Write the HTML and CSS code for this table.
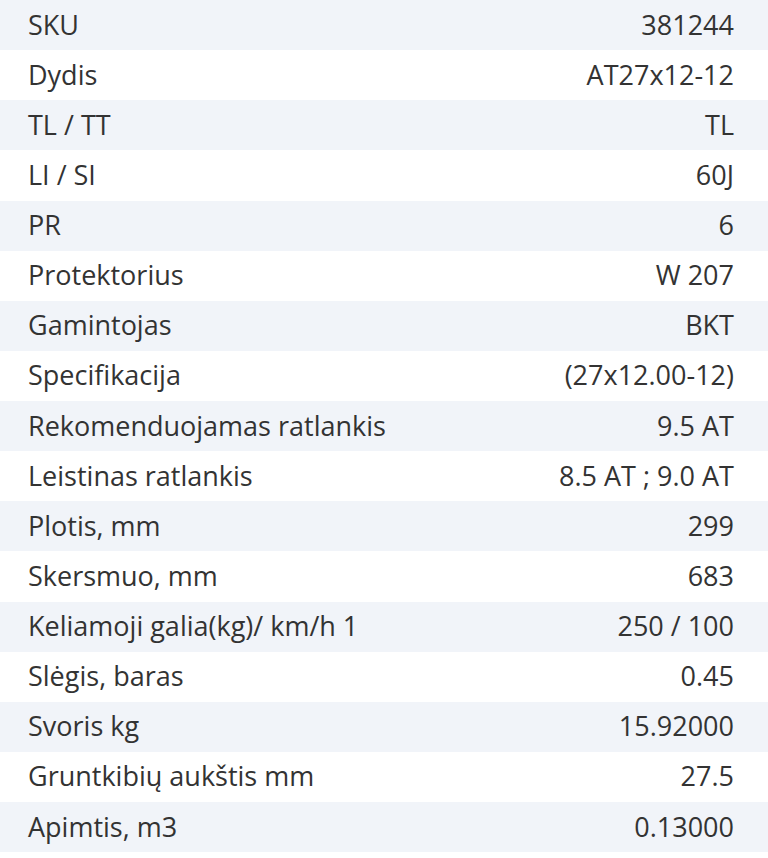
FILE: index.html
```html
<!DOCTYPE html>
<html lang="lt">
<head>
<meta charset="utf-8">
<link rel="stylesheet" href="styles.css">
</head>
<body>
<table class="specs">
<tbody>
<tr><td>SKU</td><td>381244</td></tr>
<tr><td>Dydis</td><td>AT27x12-12</td></tr>
<tr><td>TL / TT</td><td>TL</td></tr>
<tr><td>LI / SI</td><td>60J</td></tr>
<tr><td>PR</td><td>6</td></tr>
<tr><td>Protektorius</td><td>W 207</td></tr>
<tr><td>Gamintojas</td><td>BKT</td></tr>
<tr><td>Specifikacija</td><td>(27x12.00-12)</td></tr>
<tr><td>Rekomenduojamas ratlankis</td><td>9.5 AT</td></tr>
<tr><td>Leistinas ratlankis</td><td>8.5 AT ; 9.0 AT</td></tr>
<tr><td>Plotis, mm</td><td>299</td></tr>
<tr><td>Skersmuo, mm</td><td>683</td></tr>
<tr><td>Keliamoji galia(kg)/ km/h 1</td><td>250 / 100</td></tr>
<tr><td>Slėgis, baras</td><td>0.45</td></tr>
<tr><td>Svoris kg</td><td>15.92000</td></tr>
<tr><td>Gruntkibių aukštis mm</td><td>27.5</td></tr>
<tr><td>Apimtis, m3</td><td>0.13000</td></tr>
</tbody>
</table>
</body>
</html>
```
FILE: styles.css
```css
html, body {
  margin: 0;
  padding: 0;
  background: #ffffff;
}
.specs {
  width: 768px;
  border-collapse: collapse;
  font-family: "Open Sans", "Noto Sans", sans-serif;
  font-size: 27px;
  line-height: 36px;
  color: #333333;
}
.specs tr {
  height: 50.125px;
}
.specs tr:nth-child(odd) {
  background: #f1f4f9;
}
.specs td {
  padding: 0 0 1px 28px;
  vertical-align: middle;
  white-space: nowrap;
}
.specs td:last-child {
  text-align: right;
  padding: 0 34px 1px 0;
}
```
